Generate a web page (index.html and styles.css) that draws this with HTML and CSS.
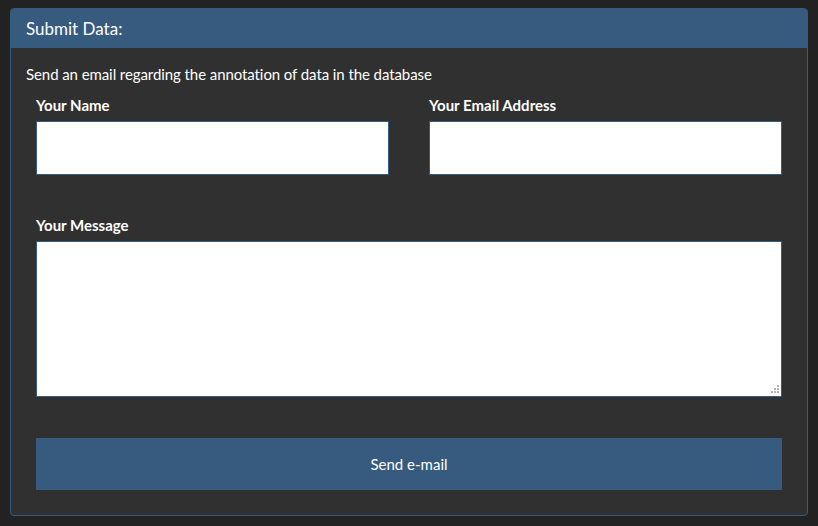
FILE: index.html
```html
<!DOCTYPE html>
<html>
<head>
<meta charset="utf-8">
<link rel="stylesheet" href="styles.css">
</head>
<body>
<div class="panel">
  <div class="panel-heading">Submit Data:</div>
  <div class="panel-body">
    <p class="intro">Send an email regarding the annotation of data in the database</p>
    <form class="form">
      <div class="row">
        <div class="field">
          <label class="label">Your Name</label>
          <input class="input" type="text">
        </div>
        <div class="field">
          <label class="label">Your Email Address</label>
          <input class="input" type="email">
        </div>
      </div>
      <div class="field message">
        <label class="label">Your Message</label>
        <div class="textarea-wrap">
          <textarea class="textarea"></textarea>
          <svg class="grip" width="8" height="8" viewBox="0 0 8 8">
            <rect x="6" y="0" width="2" height="2"/>
            <rect x="3" y="3" width="2" height="2"/>
            <rect x="6" y="3" width="2" height="2"/>
            <rect x="0" y="6" width="2" height="2"/>
            <rect x="3" y="6" width="2" height="2"/>
            <rect x="6" y="6" width="2" height="2"/>
          </svg>
        </div>
      </div>
      <button class="btn" type="button">Send e-mail</button>
    </form>
  </div>
</div>
</body>
</html>
```

FILE: styles.css
```css
html, body {
  margin: 0;
  padding: 0;
}
body {
  background: #222222;
  font-family: Lato, "Liberation Sans", sans-serif;
  color: #ffffff;
  padding: 8px 10px 10px 10px;
}
.panel {
  border: 1px solid #375a7f;
  border-radius: 4px;
  background: #303030;
  height: 508px;
  box-sizing: border-box;
  overflow: hidden;
}
.panel-heading {
  background: #375a7f;
  height: 39px;
  line-height: 39px;
  padding: 0 15px;
  font-size: 17px;
}
.panel-body {
  padding: 15px 15px;
}
.intro {
  margin: 0;
  font-size: 15px;
  line-height: 22px;
  letter-spacing: -0.08px;
}
.form {
  padding: 9px 10px 0 10px;
  display: flex;
  flex-direction: column;
}
.row {
  display: flex;
  gap: 40px;
}
.field {
  flex: 1;
  display: flex;
  flex-direction: column;
}
.label {
  font-weight: bold;
  font-size: 15px;
  line-height: 22px;
  margin-bottom: 5px;
}
.input {
  height: 54px;
  box-sizing: border-box;
  border: 1px solid #375a7f;
  background: #ffffff;
  margin: 0;
  padding: 6px 12px;
  outline: none;
}
.message {
  margin-top: 39px;
}
.textarea-wrap {
  position: relative;
  display: flex;
}
.textarea {
  flex: 1;
  height: 156px;
  box-sizing: border-box;
  border: 1px solid #375a7f;
  background: #ffffff;
  margin: 0;
  padding: 6px 12px;
  resize: none;
  outline: none;
}
.grip {
  position: absolute;
  right: 3px;
  bottom: 4px;
  fill: #b4b4b4;
}
.btn {
  margin-top: 41px;
  height: 52px;
  background: #375a7f;
  border: none;
  color: #ffffff;
  font-family: Lato, "Liberation Sans", sans-serif;
  font-size: 15px;
  cursor: pointer;
}
```
